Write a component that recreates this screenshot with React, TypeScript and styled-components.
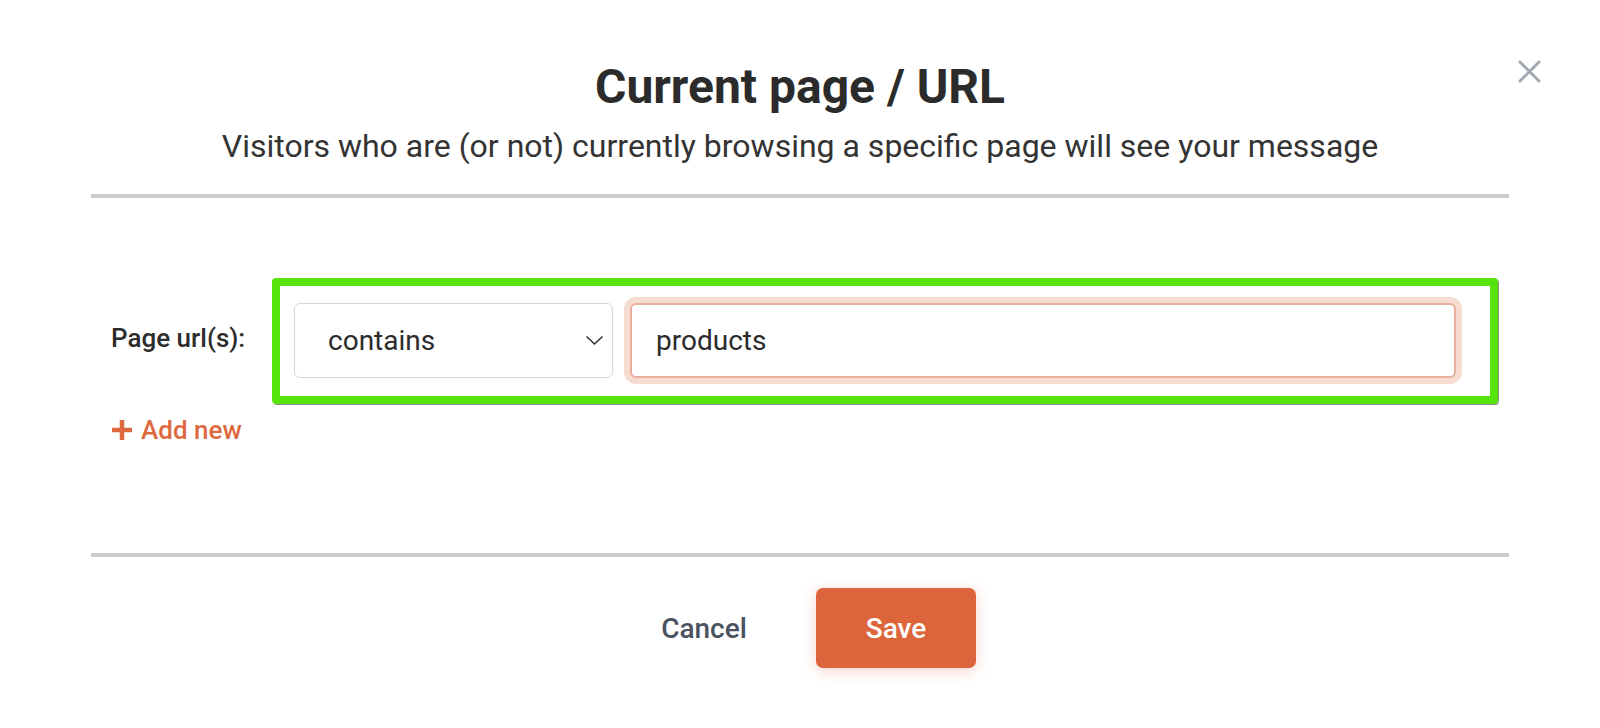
import React from "react";
import styled, { createGlobalStyle } from "styled-components";

const GlobalStyle = createGlobalStyle`
  html, body {
    margin: 0;
    padding: 0;
    background: #ffffff;
    font-family: Roboto, "Noto Sans", "Liberation Sans", sans-serif;
  }
  * {
    box-sizing: border-box;
  }
`;

const Modal = styled.div`
  position: relative;
  width: 1600px;
  height: 728px;
  background: #fff;
  display: flex;
  flex-direction: column;
  padding: 59px 91px 0;
`;

const CloseButton = styled.button`
  position: absolute;
  top: 58px;
  right: 57px;
  width: 27px;
  height: 27px;
  padding: 2px;
  border: none;
  background: transparent;
  cursor: pointer;
  display: flex;
  align-items: center;
  justify-content: center;
`;

const Title = styled.h1`
  margin: 0;
  text-align: center;
  font-size: 48px;
  line-height: 56px;
  font-weight: 700;
  color: #2b2b2b;
`;

const Subtitle = styled.p`
  margin: 12px 0 0;
  text-align: center;
  font-size: 32px;
  line-height: 38px;
  font-weight: 400;
  color: #333;
`;

const Divider = styled.hr<{ $top: number }>`
  margin: ${(p) => p.$top}px 0 0;
  border: none;
  height: 4px;
  background: #cccccc;
`;

const Body = styled.div`
  padding-top: 80px;
  display: flex;
  flex-direction: column;
`;

const FieldRow = styled.div`
  display: flex;
  align-items: flex-start;
`;

const Label = styled.label`
  width: 181px;
  flex-shrink: 0;
  padding: 45px 0 0 20px;
  font-size: 26px;
  line-height: 30px;
  font-weight: 500;
  color: #2d2d2d;
`;

const Highlight = styled.div`
  flex: 1;
  margin-right: 11px;
  border: 8px solid #55e40b;
  border-radius: 4px;
  box-shadow: 1px 1px 0 #8a8a8a;
  padding: 17px 34px 18px 14px;
  display: flex;
  align-items: center;
  gap: 17px;
`;

const SelectBox = styled.div`
  width: 319px;
  height: 75px;
  flex-shrink: 0;
  border: 1px solid #d6d6dc;
  border-radius: 6px;
  background: #fff;
  display: flex;
  align-items: center;
  justify-content: space-between;
  padding: 0 8px 0 33px;
  font-size: 28px;
  color: #2b2b2b;
`;

const TextInput = styled.input`
  flex: 1;
  height: 75px;
  border: 2px solid #e8b09c;
  border-radius: 6px;
  box-shadow: 0 0 0 6px #f6dbd0;
  outline: none;
  padding: 0 24px;
  font-family: Roboto, "Noto Sans", "Liberation Sans", sans-serif;
  font-size: 28px;
  color: #2b2b2b;
  background: #fff;
`;

const AddNew = styled.button`
  align-self: flex-start;
  margin: 11px 0 0 20px;
  padding: 0;
  border: none;
  background: transparent;
  display: flex;
  align-items: center;
  gap: 8px;
  font-family: Roboto, "Noto Sans", "Liberation Sans", sans-serif;
  font-size: 26px;
  line-height: 30px;
  font-weight: 500;
  color: #dd6a3f;
  cursor: pointer;
`;

const Footer = styled.div`
  display: flex;
  justify-content: center;
  gap: 32px;
  padding-top: 31px;
`;

const FooterButton = styled.button<{ $primary?: boolean }>`
  width: 160px;
  height: 80px;
  border: none;
  border-radius: 7px;
  font-family: Roboto, "Noto Sans", "Liberation Sans", sans-serif;
  font-size: 28px;
  font-weight: 500;
  cursor: pointer;
  background: ${(p) => (p.$primary ? "#dc653b" : "transparent")};
  color: ${(p) => (p.$primary ? "#ffffff" : "#4b5260")};
  box-shadow: ${(p) =>
    p.$primary ? "0 3px 14px rgba(220, 101, 59, 0.28)" : "none"};
`;

const App: React.FC = () => {
  return (
    <>
      <GlobalStyle />
      <Modal>
        <CloseButton aria-label="Close">
          <svg width="23" height="23" viewBox="0 0 23 23">
            <path
              d="M2 2 L21 21 M21 2 L2 21"
              stroke="#a3a9b4"
              strokeWidth="3"
              strokeLinecap="round"
            />
          </svg>
        </CloseButton>

        <Title>Current page / URL</Title>
        <Subtitle>
          Visitors who are (or not) currently browsing a specific page will see
          your message
        </Subtitle>
        <Divider $top={29} />

        <Body>
          <FieldRow>
            <Label>Page url(s):</Label>
            <Highlight>
              <SelectBox>
                <span>contains</span>
                <svg width="19" height="11" viewBox="0 0 19 11">
                  <polyline
                    points="1.5,1.5 9.5,9 17.5,1.5"
                    fill="none"
                    stroke="#333"
                    strokeWidth="1.6"
                  />
                </svg>
              </SelectBox>
              <TextInput defaultValue="products" />
            </Highlight>
          </FieldRow>
          <AddNew>
            <svg width="22" height="22" viewBox="0 0 22 22">
              <path
                d="M11 1 V21 M1 11 H21"
                stroke="#dd6a3f"
                strokeWidth="4.5"
              />
            </svg>
            Add new
          </AddNew>
        </Body>

        <Divider $top={108} />

        <Footer>
          <FooterButton>Cancel</FooterButton>
          <FooterButton $primary>Save</FooterButton>
        </Footer>
      </Modal>
    </>
  );
};

export default App;
